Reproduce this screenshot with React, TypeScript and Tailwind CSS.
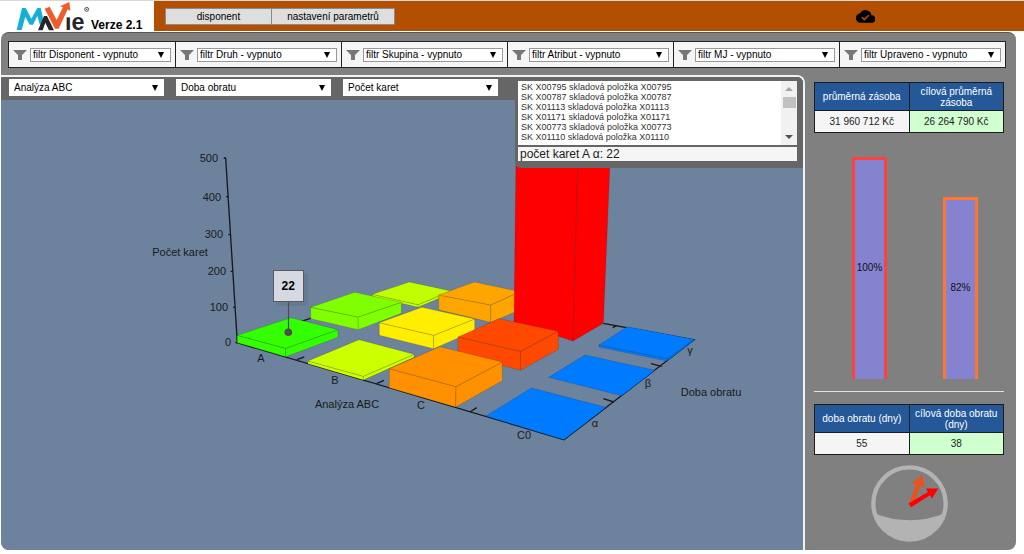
import React from "react";

const filters = ["Disponent", "Druh", "Skupina", "Atribut", "MJ", "Upraveno"];
const dimensions = [
  { label: "Osa X", value: "Analýza ABC" },
  { label: "Osa Y", value: "Doba obratu" },
  { label: "Osa Z", value: "Počet karet" },
];
const items = ["X00795", "X00787", "X01113", "X01171", "X00773", "X01110"];

function Dropdown({ label, value, className }: { label: string; value: string; className: string }) {
  return (
    <div className={`grid min-w-0 items-center bg-white ${className}`}>
      <select
        aria-label={label}
        className="col-start-1 row-start-1 h-full w-full appearance-none bg-transparent text-[10px] leading-3 text-black outline-none"
      >
        <option>{value}</option>
      </select>
      <svg viewBox="0 0 6 6" className="pointer-events-none col-start-1 row-start-1 mr-1.5 h-1.5 w-1.5 justify-self-end">
        <path d="M0 0H6L3 6Z" fill="#000" />
      </svg>
    </div>
  );
}

function Logo() {
  return (
    <svg viewBox="0 3 222 93" className="h-[31px] w-[74px]" role="img" aria-label="MaVie">
      <path d="M2 90L18 24H29L46 56L64 24H74L83 62L72 76L64 48L51 74H41L28 50L17 90Z" fill="#12b0d8" />
      <path d="M66 91L84 48H93L114 91H99L88 68L80 91Z" fill="#262626" />
      <text x="147" y="91" fontSize="70" fontWeight="700" fill="#262626" fontFamily="Liberation Sans, sans-serif">ie</text>
      <path d="M148 30H170V52H148Z" fill="#fff" />
      <path d="M86 26L101 20L122 60L141 22L132 19L160 6L163 33L155 28L128 86H117Z" fill="#f15a29" />
      <circle cx="212" cy="28" r="6" fill="none" stroke="#555" strokeWidth="3" />
      <circle cx="212" cy="28" r="2.5" fill="#555" />
    </svg>
  );
}

type P = [number, number];
type Block = { fill: string; top: [P, P, P, P]; base?: [P, P, P] };

// Faces are listed left, back, right, front; the base as left, front, right. Three units make one pixel.
const blocks: Block[] = [
  { fill: "#bfff00", top: [[1117, 883], [1228, 846], [1353, 873], [1254, 914]], base: [[1117, 889], [1254, 922], [1353, 880]] },
  { fill: "#ffa500", top: [[1316, 885], [1423, 846], [1560, 875], [1472, 915]], base: [[1316, 929], [1472, 967], [1560, 930]] },
  { fill: "#ff0000", top: [[1549, 400], [1640, 380], [1834, 390], [1736, 400]], base: [[1542, 966], [1719, 1023], [1810, 970]] },
  { fill: "#007bff", top: [[1797, 1035], [1882, 980], [2082, 1018], [2003, 1076]], base: [[1797, 1041], [2001, 1083], [2082, 1022]] },
  { fill: "#80ff00", top: [[932, 922], [1064, 877], [1204, 907], [1074, 951]], base: [[932, 956], [1075, 989], [1204, 940]] },
  { fill: "#ffee00", top: [[1138, 968], [1266, 922], [1424, 957], [1301, 1006]], base: [[1138, 1006], [1301, 1046], [1424, 992]] },
  { fill: "#ff4800", top: [[1374, 1011], [1498, 956], [1675, 994], [1562, 1054]], base: [[1374, 1060], [1561, 1111], [1675, 1048]] },
  { fill: "#007bff", top: [[1646, 1132], [1755, 1065], [1965, 1111], [1865, 1187]] },
  { fill: "#33ff00", top: [[712, 1006], [873, 953], [1014, 989], [857, 1045]], base: [[712, 1028], [857, 1070], [1014, 1012]] },
  { fill: "#ccff00", top: [[924, 1083], [1077, 1019], [1242, 1063], [1090, 1129]], base: [[924, 1091], [1090, 1140], [1242, 1072]] },
  { fill: "#ff9000", top: [[1168, 1106], [1320, 1040], [1507, 1086], [1368, 1160]], base: [[1168, 1163], [1367, 1221], [1507, 1142]] },
  { fill: "#007bff", top: [[1458, 1248], [1594, 1164], [1818, 1222], [1692, 1319]] },
];

const pts = (list: P[]) => list.map((p) => p.join(",")).join(" ");

const chartLabels: { t: string; x: number; y: number; a: "start" | "middle" | "end" }[] = [
  { t: "500", x: 218, y: 162, a: "end" },
  { t: "400", x: 221, y: 201, a: "end" },
  { t: "300", x: 223, y: 238, a: "end" },
  { t: "200", x: 226, y: 275, a: "end" },
  { t: "100", x: 228, y: 311, a: "end" },
  { t: "0", x: 231, y: 346, a: "end" },
  { t: "Počet karet", x: 180, y: 256, a: "middle" },
  { t: "A", x: 261, y: 362, a: "middle" },
  { t: "B", x: 335, y: 384, a: "middle" },
  { t: "C", x: 421, y: 409, a: "middle" },
  { t: "C0", x: 524, y: 439, a: "middle" },
  { t: "α", x: 595, y: 427, a: "middle" },
  { t: "β", x: 648, y: 387, a: "middle" },
  { t: "γ", x: 690, y: 354, a: "middle" },
  { t: "Analýza ABC", x: 347, y: 408, a: "middle" },
  { t: "Doba obratu", x: 711, y: 396, a: "middle" },
];

function Chart() {
  return (
    <svg viewBox="1 100 802 450" preserveAspectRatio="xMinYMin meet" className="min-h-0 w-full flex-1" role="img" aria-label="Počet karet podle analýzy ABC a doby obratu">
      <g transform="scale(0.33333)">
        <g stroke="#16191f" strokeWidth="4" fill="none">
          <path d="M677 474L712 1028L1692 1319L2082 1020L1810 970" />
          <path d="M712 1028L940 952" />
          <path d="M671 474h7M678 590h7M685 704h7M692 814h7M699 922h7M706 1028h6" />
          <path d="M891 1079l22-8M1130 1151l22-10M1410 1236l20-13M1842 1206l-32-10M1985 1099l-32-8M1838 983l12-6" />
        </g>
        {blocks.map((b, i) => {
          const [l, , r, f] = b.top;
          return (
            <g key={i} fill={b.fill} stroke="#000" strokeOpacity="0.16" strokeWidth="2.5" strokeLinejoin="round">
              {b.base && <polygon points={pts([l, f, b.base[1], b.base[0]])} />}
              {b.base && <polygon points={pts([f, r, b.base[2], b.base[1]])} />}
              <polygon points={pts(b.top)} />
            </g>
          );
        })}
      </g>
      <g fontFamily="Liberation Sans, Arial, sans-serif" fontSize="11" fill="#1a1a1a">
        {chartLabels.map((l) => (
          <text key={l.t} x={l.x} y={l.y} textAnchor={l.a}>{l.t}</text>
        ))}
        <rect x="276" y="273" width="32" height="33" rx="3" fill="#000" opacity="0.06" />
        <path d="M288.5 301V332" stroke="#4d4d4d" strokeWidth="1.2" />
        <circle cx="288.3" cy="332.3" r="3.8" fill="#4d4d4d" />
        <rect x="273.5" y="270.5" width="30" height="31" fill="#d5dae2" stroke="#5a5a5a" />
        <text x="288.3" y="290" textAnchor="middle" fontSize="12" fontWeight="700" fill="#000">22</text>
      </g>
    </svg>
  );
}

function ItemList() {
  return (
    <div className="absolute top-0 right-0 flex w-72 flex-col gap-0.5 rounded-bl-md bg-[#666] pt-1 pr-1.5 pb-[7px] pl-[3px]">
      <div className="flex h-16 overflow-hidden bg-white">
        <ul className="flex-1 pt-px pl-[3px] text-[9px] leading-[10px] text-[#333]">
          {items.map((c) => (
            <li key={c}>SK {c} skladová položka {c}</li>
          ))}
        </ul>
        <div className="flex w-4 flex-col items-center bg-[#f1f1f1] py-1.5">
          <svg viewBox="0 0 8 4" className="h-1 w-2"><path d="M0 4L4 0L8 4Z" fill="#a3a3a3" /></svg>
          <div className="mt-1.5 mb-auto h-[11px] w-[13px] bg-[#c1c1c1]" />
          <svg viewBox="0 0 8 4" className="h-1 w-2"><path d="M0 0H8L4 4Z" fill="#505050" /></svg>
        </div>
      </div>
      <div className="bg-[#f5f5f5] px-0.5 text-[12px] leading-[14px] text-[#222]">počet karet A α: 22</div>
    </div>
  );
}

function KpiTable({ heads, values }: { heads: string[]; values: string[] }) {
  return (
    <table className="w-full table-fixed border-collapse text-center text-[10px]">
      <thead>
        <tr className="h-7 bg-[#245899] text-white">
          {heads.map((h) => (
            <th key={h} scope="col" className="border border-[#1c1c1c] px-1 py-0 leading-[11px] font-normal">{h}</th>
          ))}
        </tr>
      </thead>
      <tbody>
        <tr className="h-[22px] text-[#222]">
          <td className="border border-[#1c1c1c] bg-[#f5f5f5] p-0 leading-3">{values[0]}</td>
          <td className="border border-[#1c1c1c] bg-[#d0ffd0] p-0 leading-3">{values[1]}</td>
        </tr>
      </tbody>
    </table>
  );
}

const bars = [
  { value: 100, border: "border-[#ff4040]" },
  { value: 82, border: "border-[#ff762e]" },
];

function Gauge() {
  return (
    <svg viewBox="0 0 230 230" className="mx-auto mt-2.5 h-[77px] w-[77px]" role="img" aria-label="Doba obratu">
      <circle cx="115" cy="115" r="108" fill="none" stroke="#b3b3b3" strokeWidth="13" />
      <path d="M9 144Q115 186 221 144A110 110 0 0 1 9 144Z" fill="#b3b3b3" />
      <path d="M113 118L134 58L122 54L154 30L160 68L148 63L124 124Z" fill="#e8521c" />
      <path d="M112 115L170 81L164 70L201 70L182 100L176 90L120 126Z" fill="#ff0000" />
    </svg>
  );
}

export default function App() {
  return (
    <div className="flex min-h-screen flex-col bg-white pb-1 font-['Liberation_Sans',Arial,sans-serif] text-black">
      <header className="flex h-8 border-t border-[#d9d9d9]">
        <div className="flex w-[154px] shrink-0 pl-4">
          <Logo />
          <span className="mt-[18px] pl-px text-[12px] leading-[13px] font-bold">Verze 2.1</span>
        </div>
        <div className="mb-px flex flex-1 items-start bg-[#b34f00] pt-[7px] pl-[11px]">
          <nav className="flex">
            <button type="button" className="h-[17px] w-[107px] border border-[#858c91] bg-[#dedede] text-[10px] leading-3">disponent</button>
            <button type="button" className="-ml-px h-[17px] w-[124px] border border-[#858c91] bg-[#dedede] text-[10px] leading-3">nastavení parametrů</button>
          </nav>
          <svg viewBox="0 0 24 16" className="mt-0.5 mr-[149px] ml-auto h-[13px] w-[19px] self-start" role="img" aria-label="Uloženo">
            <path d="M19.4 6A7.5 7.5 0 0 0 5.4 4 6 6 0 0 0 6 16H19A5 5 0 0 0 19.4 6Z" fill="#000" />
            <path d="M7.5 9L10.5 12L16 6.5" fill="none" stroke="#b34f00" strokeWidth="2" />
          </svg>
        </div>
      </header>

      <main className="mr-2 ml-px flex flex-1 flex-col overflow-hidden rounded-lg border-t border-[#555] bg-[#808080]">
        <div className="mt-2 mr-[10px] mb-[7px] ml-[7px] grid grid-cols-6 border border-[#222] bg-[#f5f5f5]">
          {filters.map((f, i) => (
            <div key={f} className={`flex h-[25px] items-center gap-[3px] px-1 ${i ? "border-l border-[#222]" : ""}`}>
              <svg viewBox="0 0 14 10" className="h-2.5 w-3.5 shrink-0"><path d="M0 0H14L9 5V10H5V5Z" fill="#777" /></svg>
              <Dropdown label={`filtr ${f}`} value={`filtr ${f} - vypnuto`} className="h-3.5 flex-1 border border-[#999] pl-0.5" />
            </div>
          ))}
        </div>

        <div className="flex flex-1">
          <section className="relative flex min-w-0 flex-1 flex-col overflow-hidden rounded-tr-lg border-t-2 border-r-2 border-[#edf3f7] bg-[#6c829d]">
            <div className="flex h-[23px] items-start gap-3 bg-[#666] pt-0.5 pl-2">
              {dimensions.map((d) => (
                <Dropdown key={d.value} label={d.label} value={d.value} className="h-[17px] w-[155px] pl-[5px]" />
              ))}
            </div>
            <Chart />
            <ItemList />
          </section>

          <aside className="flex w-[211px] shrink-0 flex-col pt-[7px] pr-3 pl-[9px]">
            <KpiTable heads={["průměrná zásoba", "cílová průměrná zásoba"]} values={["31 960 712 Kč", "26 264 790 Kč"]} />
            <div className="mt-6 flex h-[222px] items-end justify-center gap-14 pl-3">
              {bars.map((b) => (
                <div
                  key={b.value}
                  className={`flex w-[35px] items-center justify-center border-x-[3px] border-t-[3px] bg-[#8583cf] pb-1 text-[10px] text-[#111] ${b.border}`}
                  style={{ height: `${b.value}%` }}
                >
                  {b.value}%
                </div>
              ))}
            </div>
            <hr className="mt-3 mb-3 border-t border-[#e0e0e0]" />
            <KpiTable heads={["doba obratu (dny)", "cílová doba obratu (dny)"]} values={["55", "38"]} />
            <Gauge />
          </aside>
        </div>
      </main>
    </div>
  );
}
